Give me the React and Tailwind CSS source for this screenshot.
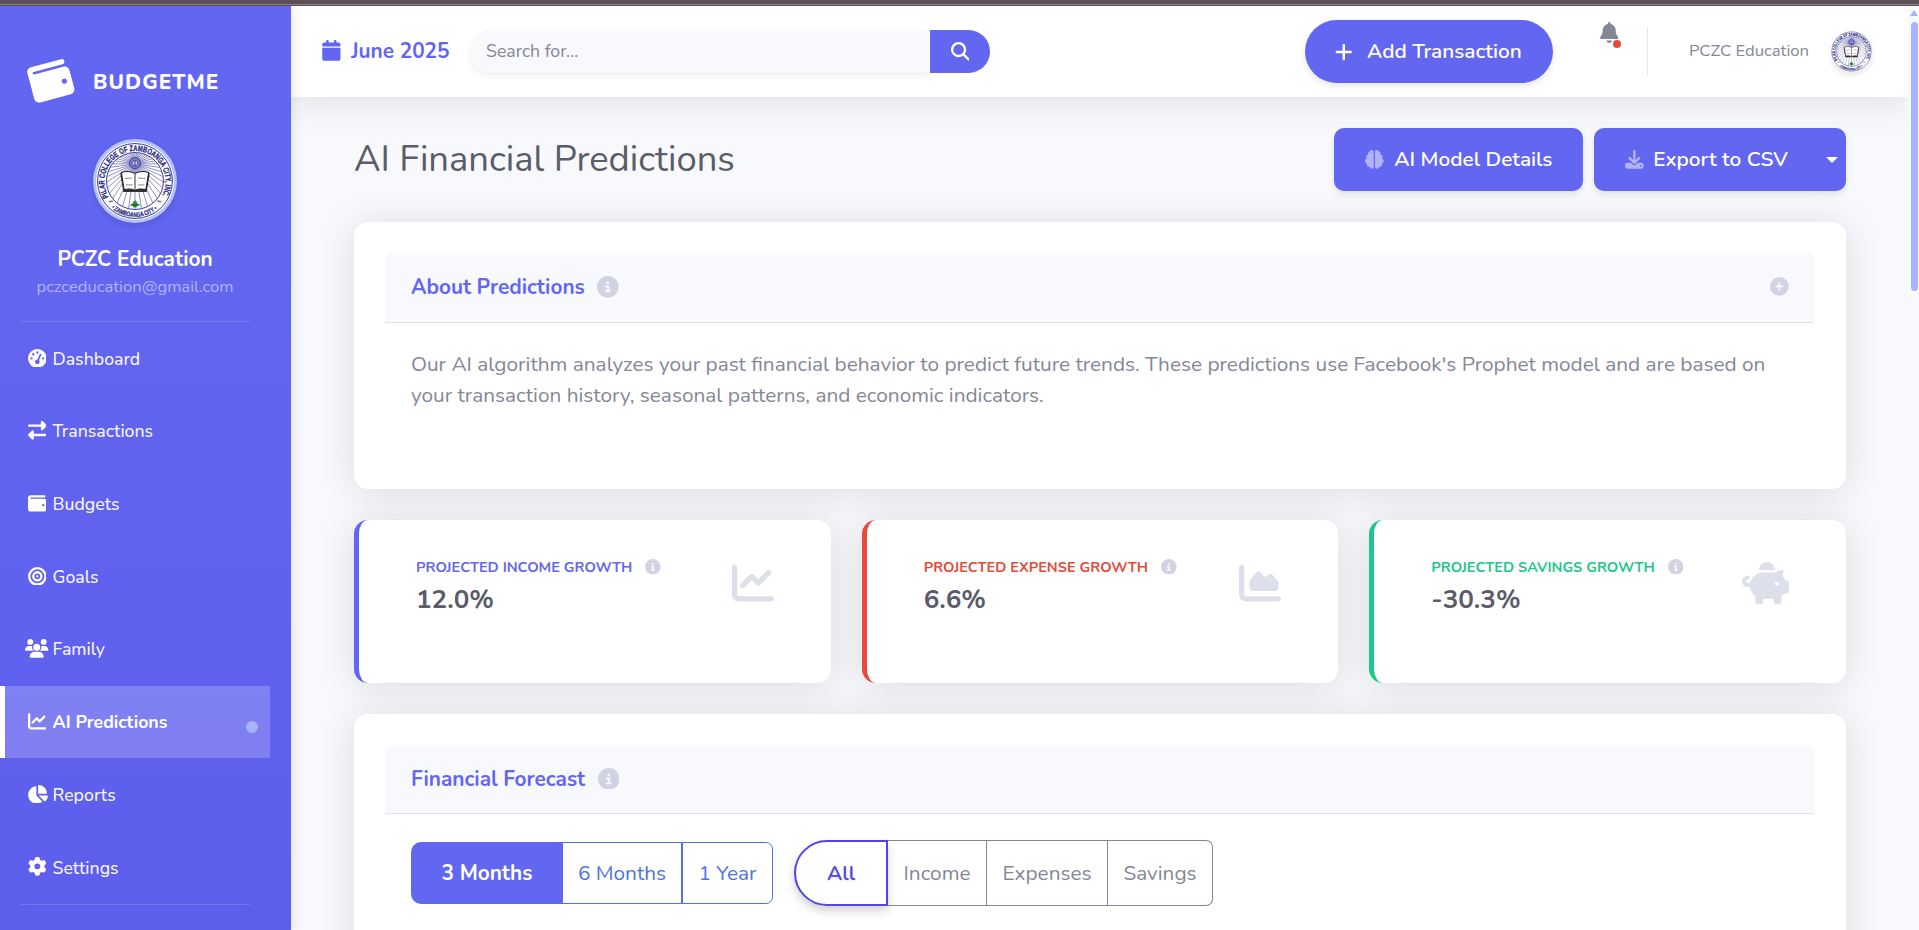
import React from "react";
import {
  FaWallet,
  FaGaugeHigh,
  FaRightLeft,
  FaBullseye,
  FaUsers,
  FaChartLine,
  FaChartPie,
  FaChartArea,
  FaGear,
  FaCalendar,
  FaMagnifyingGlass,
  FaPlus,
  FaBell,
  FaBrain,
  FaDownload,
  FaCircleInfo,
  FaCirclePlus,
  FaPiggyBank,
} from "react-icons/fa6";

const rays = Array.from({ length: 44 }, (_, i) => {
  const a = (i / 44) * Math.PI * 2;
  return {
    x: 50 + 70 * Math.cos(a),
    y: 28 + 70 * Math.sin(a),
  };
});

function Seal({ id, className }) {
  return (
    <svg viewBox="0 0 100 100" className={className}>
      <defs>
        <path id={`${id}-top`} d="M 16.2 70.5 A 39.2 39.2 0 1 1 83.8 70.5" />
        <path id={`${id}-bottom`} d="M 19.5 84.5 A 46 46 0 0 0 80.5 84.5" />
        <clipPath id={`${id}-clip`}>
          <circle cx="50" cy="50" r="36" />
        </clipPath>
      </defs>
      <circle cx="50" cy="50" r="50" fill="#fff" />
      <circle cx="50" cy="50" r="48" fill="none" stroke="#2b2b8c" strokeWidth="1.2" />
      <circle cx="50" cy="50" r="36.5" fill="none" stroke="#2b2b8c" strokeWidth="1.2" />
      <g clipPath={`url(#${id}-clip)`} stroke="#4a4aa5" strokeWidth="0.8">
        {rays.map((r, i) => (
          <line key={i} x1="50" y1="28" x2={r.x} y2={r.y} />
        ))}
      </g>
      <circle cx="50" cy="27" r="7" fill="#7f80c4" stroke="#2b2b8c" strokeWidth="1" />
      <circle cx="50" cy="27" r="3.6" fill="#c9caf0" stroke="#2b2b8c" strokeWidth="0.8" />
      <path d="M50 23.5v8" stroke="#2b2b8c" strokeWidth="1.2" />
      <path d="M31 40 L35 64 L65 64 L69 40 Z" fill="#333" />
      <path d="M32.5 39 Q42 36 50 40 Q58 36 67.5 39 L64 61 Q56 59 50 62 Q44 59 36 61 Z" fill="#fff" stroke="#222" strokeWidth="1.3" />
      <path d="M50 40v22" stroke="#222" strokeWidth="1.2" />
      <path d="M37 47l9-1M54 46l9 1M38 55l9 0M54 55l8 0" stroke="#777" strokeWidth="1.1" />
      <path d="M50 77l-7 4 5 1-1 2 3-1 3 1-1-2 5-1z" fill="#1c7a2c" />
      <circle cx="50" cy="77.5" r="2.4" fill="#2f8f3c" />
      <path d="M50 79v5" stroke="#1c5a22" strokeWidth="1" />
      <path d="M16.5 76.5l5-1M78.5 75.5l5 1" stroke="#777" strokeWidth="2" />
      <text fontFamily="Liberation Sans, sans-serif" fontWeight="700" fontSize="10.4" fill="#1f1f80" stroke="#1f1f80" strokeWidth="0.35">
        <textPath href={`#${id}-top`} textLength="162" lengthAdjust="spacingAndGlyphs">
          PILAR COLLEGE OF ZAMBOANGA CITY, INC.
        </textPath>
      </text>
      <text fontFamily="Liberation Sans, sans-serif" fontWeight="700" fontSize="8.4" fill="#1f1f80" stroke="#1f1f80" strokeWidth="0.3">
        <textPath href={`#${id}-bottom`} textLength="64" lengthAdjust="spacingAndGlyphs">
          • ZAMBOANGA CITY •
        </textPath>
      </text>
    </svg>
  );
}

const navItems = [
  { label: "Dashboard", icon: FaGaugeHigh },
  { label: "Transactions", icon: FaRightLeft },
  { label: "Budgets", icon: FaWallet },
  { label: "Goals", icon: FaBullseye },
  { label: "Family", icon: FaUsers, wide: true },
  { label: "AI Predictions", icon: FaChartLine, active: true },
  { label: "Reports", icon: FaChartPie, pie: true },
  { label: "Settings", icon: FaGear },
];

function NavItem({ label, icon: Icon, wide, pie, active }) {
  const iconSize = wide ? "h-[18.7px] w-[23.4px]" : pie ? "h-[18.7px] w-[21px]" : "h-[18.7px] w-[18.7px]";
  return (
    <a
      className={
        active
          ? "flex h-[72px] w-[270px] items-center border-l-[5px] border-white bg-white/20 pr-3 pb-[2px] pl-[20px] font-bold text-white"
          : "flex h-[72px] w-[270px] items-center pb-[2px] pl-[25px] font-medium text-white/95"
      }
    >
      <span className="flex w-6 shrink-0 justify-center text-white">
        <Icon className={`${iconSize} shrink-0`} />
      </span>
      <span className="ml-[3.5px] pt-[2px] text-[17.68px]">{label}</span>
      {active && <span className="mt-[12px] ml-auto size-3 rounded-full bg-[#a5b4fc]" />}
    </a>
  );
}

function Sidebar() {
  return (
    <aside className="relative z-20 flex h-full w-[291px] shrink-0 flex-col bg-linear-to-b from-[#6366f1] from-25% to-[#5e5eed] shadow-[4px_0_10px_rgba(0,0,0,0.07)]">
      <div className="flex h-[133px] items-center pt-[17px] pl-[29.5px]">
        <FaWallet className="size-[41.6px] -rotate-15 text-white" />
        <span className="ml-[22px] pt-[3px] text-[20.8px] font-extrabold tracking-[1.04px] text-white">BUDGETME</span>
      </div>
      <div className="flex w-[270px] flex-col items-center">
        <div className="size-[84px] rounded-full bg-[#b4c2fd] p-[3px] shadow-[0_3px_6px_rgba(0,0,0,0.12)]">
          <Seal id="side" className="size-[78px]" />
        </div>
        <div className="mt-[21px] text-[20.8px] leading-[31px] font-bold text-white">PCZC Education</div>
        <div className="-mt-px text-[16.64px] leading-[25px] text-white/50">pczceducation@gmail.com</div>
      </div>
      <div className="mt-[22px] ml-[21px] h-px w-[229px] bg-white/15" />
      <nav className="mt-px flex flex-col gap-[0.7px]">
        {navItems.map((n) => (
          <NavItem key={n.label} {...n} />
        ))}
      </nav>
      <div className="ml-[21px] h-px w-[229px] shrink-0 bg-white/15" />
    </aside>
  );
}

function Topbar() {
  return (
    <header className="relative z-10 flex h-[91px] shrink-0 items-center bg-white pr-[36px] pl-[31px] shadow-[0_3px_36px_rgba(58,59,69,0.15)]">
      <div className="flex items-center text-[#6366f1]">
        <FaCalendar className="mb-[2px] h-[20.8px] w-[18.7px]" />
        <span className="ml-[10.5px] pt-px text-[20.8px] font-bold">June 2025</span>
      </div>
      <div className="ml-[19.5px] flex h-[43px] w-[461px] items-center rounded-l-full bg-[#f8f9fc] pl-[17px] text-[17.68px] text-[#858796] shadow-[0_3px_6px_rgba(0,0,0,0.06)]">
        Search for...
      </div>
      <button className="flex h-[43px] w-[60px] items-center justify-center rounded-r-full bg-[#6366f1] text-white">
        <FaMagnifyingGlass className="size-[18.7px]" />
      </button>
      <button className="ml-auto flex h-[63px] w-[248px] items-center rounded-full bg-[#6366f1] pl-[30px] text-white shadow-[0_3px_6px_rgba(0,0,0,0.1)]">
        <FaPlus className="h-[20px] w-[17.5px]" />
        <span className="ml-[15px] text-[20.8px] font-semibold">Add Transaction</span>
      </button>
      <div className="relative mb-[39px] ml-[47px]">
        <FaBell className="h-[21px] w-[18.4px] text-[#858796]" />
        <span className="absolute top-[18px] left-[13px] size-2 rounded-full bg-[#e74a3b]" />
      </div>
      <div className="ml-[29px] h-[49px] w-px bg-[#e3e6f0]" />
      <span className="ml-[41px] text-[16.64px] text-[#858796]">PCZC Education</span>
      <div className="ml-[22px] size-[41px] rounded-full shadow-[0_3px_6px_rgba(0,0,0,0.1)]">
        <Seal id="nav" className="size-[41px]" />
      </div>
    </header>
  );
}

function Panel({ title, right, className, headClass, children }) {
  return (
    <section className={`rounded-[14px] bg-white py-[31px] pr-[32px] pl-[31px] shadow-[0_3px_36px_rgba(58,59,69,0.15)] ${className}`}>
      <div className={`flex items-center rounded-t-[6px] border-b border-[#e0e2f0] bg-[#f8f9fc] pr-[25px] pl-[26px] ${headClass}`}>
        <h2 className="pt-px text-[20.8px] font-bold text-[#6366f1]">{title}</h2>
        <FaCircleInfo className="mb-px ml-[12.5px] size-[21.6px] text-[#d1d3e2]" />
        {right}
      </div>
      {children}
    </section>
  );
}

const stats = [
  { label: "PROJECTED INCOME GROWTH", value: "12.0%", icon: FaChartLine, border: "border-[#6366f1]", text: "text-[#6366f1]", size: "h-[42px] w-[42px]" },
  { label: "PROJECTED EXPENSE GROWTH", value: "6.6%", icon: FaChartArea, border: "border-[#e74a3b]", text: "text-[#e74a3b]", size: "h-[42px] w-[42px]" },
  { label: "PROJECTED SAVINGS GROWTH", value: "-30.3%", icon: FaPiggyBank, border: "border-[#1cc88a]", text: "text-[#1cc88a]", size: "h-[42px] w-[47.3px]" },
];

function StatCard({ label, value, icon: Icon, border, text, size }) {
  return (
    <div className={`flex h-[163px] flex-1 items-start justify-between rounded-[14px] border-l-[5px] bg-white pt-[36px] pr-[57px] pl-[57px] shadow-[0_3px_36px_rgba(58,59,69,0.15)] ${border}`}>
      <div>
        <div className="flex h-[21px] items-center">
          <span className={`pt-[3px] text-[14.56px] font-bold ${text}`}>{label}</span>
          <FaCircleInfo className="ml-[13px] size-[15.6px] text-[#d1d3e2]" />
        </div>
        <div className="mt-[6px] text-[26px] leading-[33px] font-bold text-[#5a5c69]">{value}</div>
      </div>
      <Icon className={`mt-[6px] text-[#dddfeb] ${size}`} />
    </div>
  );
}

export default function App() {
  return (
    <div className="flex h-[930px] w-full flex-col overflow-hidden bg-[#f8f9fc] font-[Nunito,Lato,sans-serif]">
      <div className="h-[6px] shrink-0 border-b border-[#5c4f5a] bg-[#5d5058]">
        <div className="h-[4px]" />
        <div className="h-px bg-[#8a8187]" />
      </div>
      <div className="flex min-h-0 flex-1">
        <Sidebar />
        <div className="flex min-w-0 flex-1 flex-col overflow-hidden">
          <Topbar />
          <main className="flex flex-1 flex-col gap-[31px] pt-[31px] pr-[62px] pl-[63px]">
            <div className="flex h-[63px] shrink-0 items-center">
              <h1 className="text-[36.4px] text-[#5a5c69]">AI Financial Predictions</h1>
              <button className="ml-auto flex h-[63px] w-[249px] items-center rounded-[10px] bg-[#6366f1] pl-[31px] text-white shadow-[0_3px_6px_rgba(0,0,0,0.1)]">
                <FaBrain className="size-[18.7px] opacity-50" />
                <span className="ml-[10.5px] text-[20.8px] font-semibold">AI Model Details</span>
              </button>
              <div className="ml-[11px] flex h-[63px] w-[252px] items-center rounded-[10px] bg-[#6366f1] pl-[31px] text-white shadow-[0_3px_6px_rgba(0,0,0,0.1)]">
                <FaDownload className="size-[18.7px] opacity-50" />
                <span className="ml-[9.5px] text-[20.8px] font-semibold">Export to CSV</span>
                <svg viewBox="0 0 12 6" className="mr-[8px] ml-auto h-[6px] w-[12px]">
                  <path d="M0 0h12L6 6z" fill="#fff" />
                </svg>
              </div>
            </div>

            <Panel
              title="About Predictions"
              className="h-[267px] shrink-0"
              headClass="h-[70px]"
              right={<FaCirclePlus className="mb-[2px] ml-auto size-[18.7px] text-[#d1d3e2]" />}
            >
              <p className="pt-[26px] pr-[25px] pl-[26px] text-[20.8px] leading-[31.2px] text-[#858796]">
                Our AI algorithm analyzes your past financial behavior to predict future trends. These predictions use Facebook's Prophet model and are based on
                your transaction history, seasonal patterns, and economic indicators.
              </p>
            </Panel>

            <div className="flex shrink-0 gap-[31px]">
              {stats.map((s) => (
                <StatCard key={s.label} {...s} />
              ))}
            </div>

            <Panel title="Financial Forecast" className="h-[500px] shrink-0" headClass="h-[69px]">
              <div className="flex items-center gap-[21px] px-[26px] pt-[26px] text-[20.8px]">
                <div className="flex h-[62px]">
                  <button className="w-[152px] rounded-l-[10px] bg-[#6366f1] pt-[2px] font-bold text-white">3 Months</button>
                  <button className="w-[119px] border border-l-0 border-[#4e73df] pt-[2px] text-[#4e73df]">6 Months</button>
                  <button className="w-[91px] rounded-r-[7px] border border-[#4e73df] pt-[2px] text-[#4e73df]">1 Year</button>
                </div>
                <div className="flex h-[66px] text-[#858796]">
                  <button className="w-[94px] rounded-l-full border-2 border-[#4f46e5] pt-[2px] font-semibold text-[#4f46e5] shadow-[0_5px_10px_rgba(0,0,0,0.18)] text-shadow-[0_1px_2px_rgba(0,0,0,0.15)]">
                    All
                  </button>
                  <button className="w-[99px] border border-l-0 border-[#858796] pt-[2px]">Income</button>
                  <button className="w-[121px] border border-l-0 border-[#858796] pt-[2px]">Expenses</button>
                  <button className="w-[105px] rounded-r-[7px] border border-l-0 border-[#858796] pt-[2px]">Savings</button>
                </div>
              </div>
            </Panel>
          </main>
        </div>
        <div className="relative z-10 flex w-[11px] shrink-0 flex-col items-end bg-[#f8f9fc] pt-[4px] pr-[1px]">
          <svg viewBox="0 0 8 6" className="h-[6px] w-[8px]">
            <path d="M4 0l4 6H0z" fill="#a5b4fc" />
          </svg>
          <div className="mt-[6px] h-[269px] w-[7px] rounded-full bg-[#a5b4fc]" />
        </div>
      </div>
    </div>
  );
}
